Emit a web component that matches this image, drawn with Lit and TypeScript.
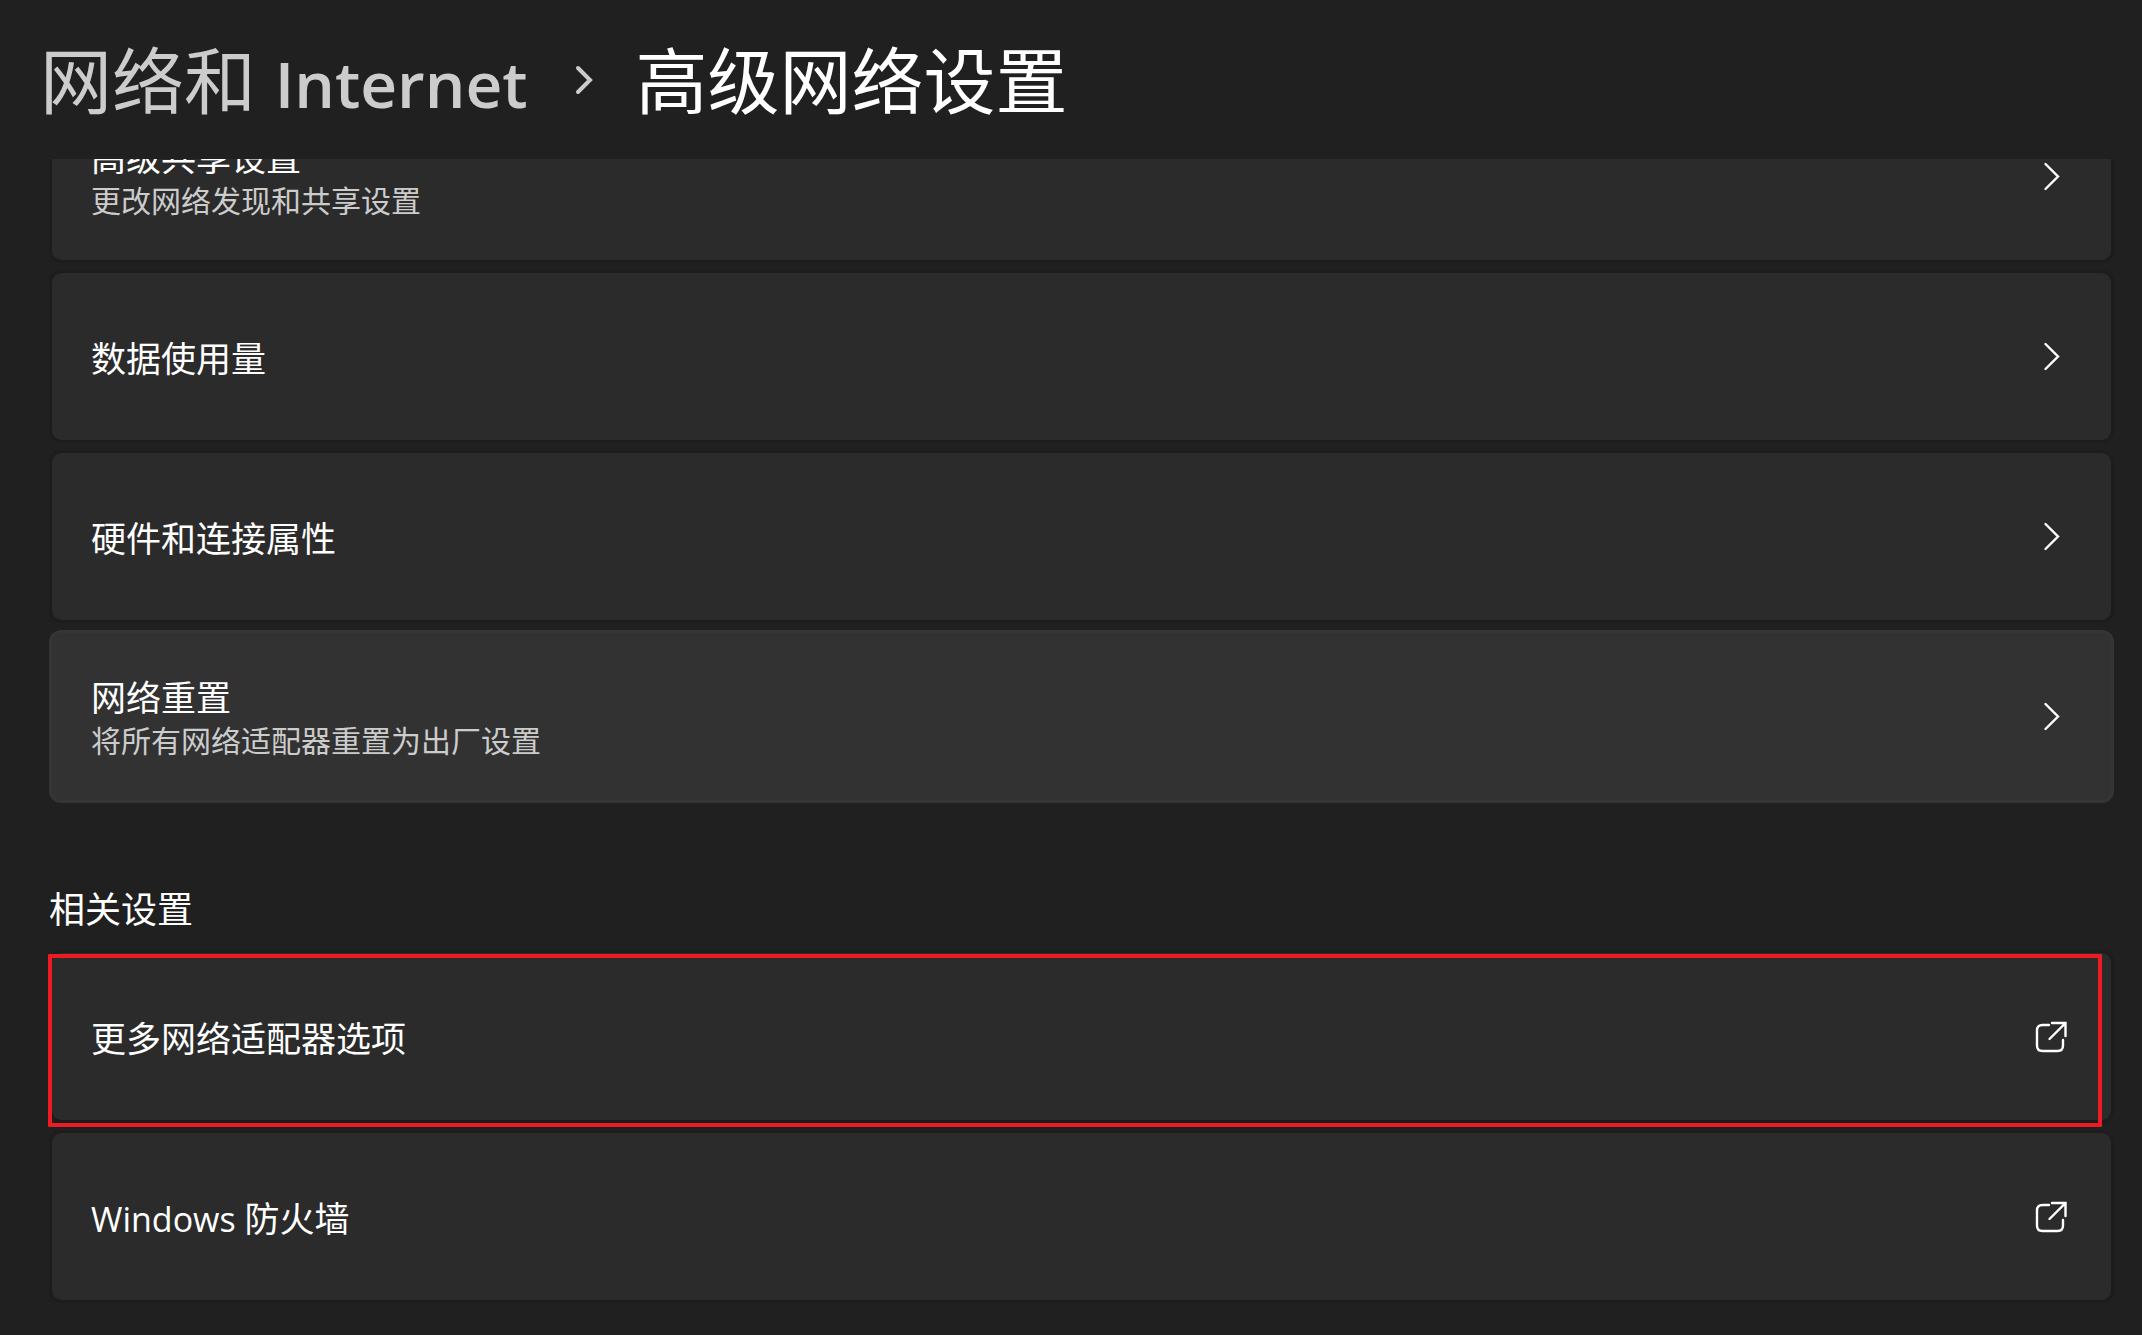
import { LitElement, html, css, svg, nothing } from "lit";
import { customElement, property } from "lit/decorators.js";

interface SettingItem {
  title: string;
  latin?: string;
  detail?: string;
  hover?: boolean;
  marked?: boolean;
}

const settings: SettingItem[] = [
  { title: "高级共享设置", detail: "更改网络发现和共享设置" },
  { title: "数据使用量" },
  { title: "硬件和连接属性" },
  { title: "网络重置", detail: "将所有网络适配器重置为出厂设置", hover: true },
];

const related: SettingItem[] = [
  { title: "更多网络适配器选项", marked: true },
  { latin: "Windows", title: "防火墙" },
];

const chevron = svg`<path d="M10.5 3 L23 15.5 L10.5 28" stroke-width="2.4" />`;

const external = svg`
  <path d="M14 4 H7.5 Q2 4 2 9.5 V24.5 Q2 30 7.5 30 H22.5 Q28 30 28 24.5 V19" stroke-width="2.4" />
  <path d="M17 2 H30.5 V15 M30 2.5 L14.5 18" stroke-width="2.4" />`;

@customElement("setting-card")
export class SettingCard extends LitElement {
  @property() heading = "";
  @property() latin = "";
  @property() detail = "";
  @property({ type: Boolean }) opens = false;
  @property({ type: Boolean }) hovered = false;

  static styles = css`
    :host {
      display: block;
    }
    .card {
      box-sizing: border-box;
      display: flex;
      align-items: center;
      justify-content: space-between;
      width: 100%;
      min-height: 173px;
      padding: 0 44px 0 39px;
      border: 3px solid #1d1d1d;
      border-radius: 12px;
      background: #2b2b2b;
      background-clip: padding-box;
      color: #ffffff;
      font: inherit;
      text-align: left;
      text-decoration: none;
    }
    .hovered {
      border-color: #353535;
      background: #323232;
    }
    .copy {
      display: flex;
      flex-direction: column;
      padding-top: 4px;
    }
    .heading {
      font-size: 35px;
      line-height: 44px;
    }
    .latin {
      font-size: 34px;
    }
    .detail {
      font-size: 30px;
      line-height: 42px;
      color: #cccccc;
    }
    .icon {
      flex: none;
      width: 32px;
      height: 32px;
      fill: none;
      stroke: currentColor;
      stroke-linecap: round;
      stroke-linejoin: miter;
    }
  `;

  render() {
    const body = html`
      <span class="copy">
        <span class="heading"
          >${this.latin ? html`<span class="latin">${this.latin} </span>` : nothing}${this.heading}</span
        >
        ${this.detail ? html`<span class="detail">${this.detail}</span>` : nothing}
      </span>
      <svg class="icon" viewBox="0 0 32 32" aria-hidden="true">
        ${this.opens ? external : chevron}
      </svg>
    `;
    return this.opens
      ? html`<a class="card" href="#">${body}</a>`
      : html`<button class="card ${this.hovered ? "hovered" : ""}" type="button">${body}</button>`;
  }
}

@customElement("app-root")
export class AppRoot extends LitElement {
  static styles = css`
    :host {
      display: flex;
      flex-direction: column;
      height: 100vh;
      overflow: hidden;
      background: #202020;
      color: #ffffff;
      font-family: "Open Sans", "Noto Sans CJK SC", sans-serif;
    }
    .top {
      flex: none;
      box-sizing: border-box;
      height: 159px;
      padding: 32px 40px 0;
    }
    .trail {
      display: flex;
      align-items: center;
      margin: 0;
      padding: 0;
      list-style: none;
      font-size: 72px;
      line-height: 96px;
    }
    .parent {
      color: #cccccc;
      text-decoration: none;
    }
    .latin {
      font-weight: 600;
      font-size: 64px;
      line-height: 64px;
    }
    .crumb {
      display: flex;
      align-items: center;
    }
    .arrow {
      width: 32px;
      height: 32px;
      margin: 0 36px 0 40px;
      fill: none;
      stroke: #cccccc;
      stroke-width: 4;
      stroke-linecap: round;
    }
    .current {
      margin: 0;
      font-size: 72px;
      font-weight: 400;
    }
    .scroller {
      flex: 1;
      min-height: 0;
      overflow: hidden;
    }
    /* The list is scrolled, so its first card sits partly under the header. */
    .page {
      margin-top: -69px;
      padding: 0 28px 32px 49px;
    }
    .list {
      display: grid;
      gap: 7px;
      margin: 0;
      padding: 0;
      list-style: none;
    }
    .group {
      margin: 83px 0 16px;
      font-size: 36px;
      line-height: 48px;
      font-weight: 400;
    }
    .entry {
      position: relative;
    }
    .marked::after {
      content: "";
      position: absolute;
      inset: 4px 12px -4px -1px;
      border: 4px solid #ed1c24;
      border-radius: 1px;
      pointer-events: none;
    }
  `;

  private list(items: SettingItem[], opens = false) {
    return html`<ul class="list">
      ${items.map(
        (item) => html`<li class="entry ${item.marked ? "marked" : ""}">
          <setting-card
            .heading=${item.title}
            .latin=${item.latin ?? ""}
            .detail=${item.detail ?? ""}
            .opens=${opens}
            .hovered=${item.hover ?? false}
          ></setting-card>
        </li>`,
      )}
    </ul>`;
  }

  render() {
    return html`
      <header class="top">
        <nav>
          <ol class="trail">
            <li><a class="parent" href="#">网络和 <span class="latin">Internet</span></a></li>
            <li class="crumb">
              <svg class="arrow" viewBox="0 0 32 32" aria-hidden="true">
                <path d="M10 4 L22 16 L10 28" />
              </svg>
              <h1 class="current">高级网络设置</h1>
            </li>
          </ol>
        </nav>
      </header>
      <main class="scroller">
        <div class="page">
          ${this.list(settings)}
          <h2 class="group">相关设置</h2>
          ${this.list(related, true)}
        </div>
      </main>
    `;
  }
}
